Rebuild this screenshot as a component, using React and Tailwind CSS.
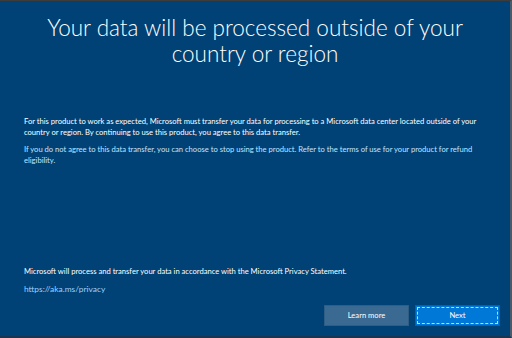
import React from "react";

export default function App() {
  return (
    <div className="flex h-[338px] w-[512px] flex-col border-t border-r-2 border-b-2 border-t-[#3c3c3c] border-r-[#4a5a68] border-b-[#1b3550] bg-[#004275] font-['Lato',sans-serif] text-white">
      <h1 className="mx-auto mt-[14px] w-[440px] text-center text-[22.5px] font-light leading-[26px]">
        Your data will be processed outside of your country or region
      </h1>
      <div className="mt-[49px] space-y-[6px] px-[24px] text-[7.6px] leading-[11px]">
        <p>
          For this product to work as expected, Microsoft must transfer your data for processing to a Microsoft data center located outside of your country or region. By continuing to use this product, you agree to this data transfer.
        </p>
        <p className="text-[#c4e2ff]">
          If you do not agree to this data transfer, you can choose to stop using the product. Refer to the terms of use for your product for refund eligibility.
        </p>
      </div>
      <div className="flex-1" />
      <div className="px-[24px] text-[7.6px] leading-[11px]">
        <p>Microsoft will process and transfer your data in accordance with the Microsoft Privacy Statement.</p>
        <p className="mt-[7px] text-[8.4px] text-[#9fd0ff]">https://aka.ms/privacy</p>
      </div>
      <div className="mt-[10px] mb-[10px] flex justify-end gap-[6px] pr-[10px]">
        <button type="button" className="h-[21px] w-[85px] border border-[#2f5d84] bg-[#3a6a92] text-[7.6px] text-white">
          Learn more
        </button>
        <button type="button" className="h-[21px] w-[85px] border border-[#0b5fa8] bg-[#0078d7] p-[1px] text-[7.6px] text-white">
          <span className="flex h-full w-full items-center justify-center border border-dashed border-[#b9d9f5]">Next</span>
        </button>
      </div>
    </div>
  );
}
